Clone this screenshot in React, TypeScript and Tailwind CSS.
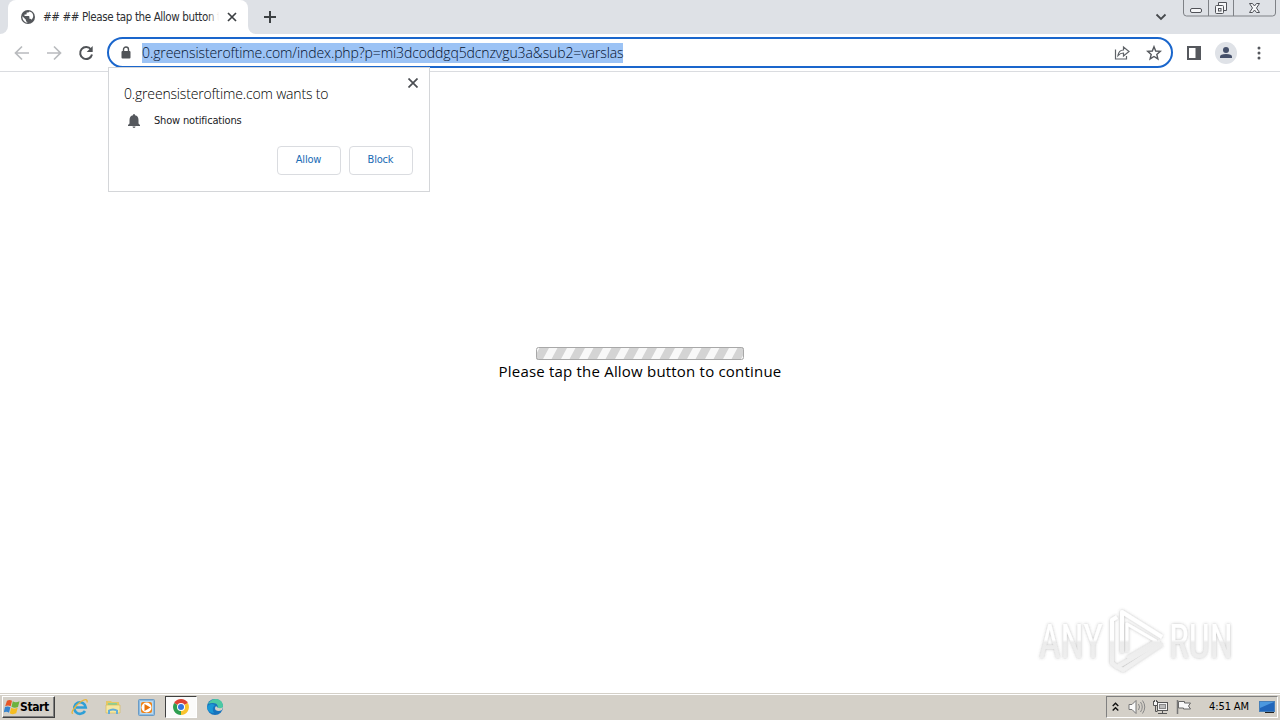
import React from "react";

function TabStrip() {
  return (
    <div className="flex h-[34px] shrink-0 items-start bg-[#dee1e6]">
      <div className="h-[34px] w-2 bg-white">
        <div className="h-full rounded-br-lg bg-[#dee1e6]" />
      </div>
      <div className="flex h-[34px] w-[240px] items-center rounded-t-lg bg-white pl-[13px]">
        <svg width="14" height="14" viewBox="2 2 20 20" className="shrink-0">
          <circle cx="12" cy="12" r="10" fill="#54575b" />
          <path d="M4 11l5 5v1c0 1.100.9 2 2 2v1.200C7 20 4 16 4 12zM14 4c-.3 1-1 1.600-2 1.600h-2v2c0 .5-.5 1-1 1H7v2h6c.5 0 1 .5 1 1v3h1c.9 0 1.600.6 1.900 1.400C22 11 19 5 14 4z" fill="#fff" />
        </svg>
        <div className="relative ml-2 w-[176px] shrink-0 overflow-hidden whitespace-nowrap text-[11.5px] leading-[16px] tracking-[-0.38px] text-[#2d2f33]">
          ## ## Please tap the Allow button t
          <div className="absolute inset-y-0 right-0 w-3 bg-linear-to-r from-white/0 to-white" />
        </div>
        <svg width="10" height="10" viewBox="0 0 10 10" className="ml-[8px] shrink-0" stroke="#3c4043" strokeWidth="1.7">
          <path d="M1 1l8 8M9 1L1 9" />
        </svg>
      </div>
      <div className="h-[34px] w-2 bg-white">
        <div className="h-full rounded-bl-lg bg-[#dee1e6]" />
      </div>
      <svg width="14" height="14" viewBox="0 0 14 14" className="mt-[10px] ml-[7px]" stroke="#3c4043" strokeWidth="2">
        <path d="M7 1v12M1 7h12" />
      </svg>
      <div className="flex-1" />
      <svg width="12" height="8" viewBox="0 0 12 8" className="mt-[13px] mr-[16px]" fill="none" stroke="#46494d" strokeWidth="1.8">
        <path d="M1.500 1.500L6 6l4.500-4.500" />
      </svg>
      <svg width="94" height="18" viewBox="0 0 94 18" className="mr-[3px]" fill="none" stroke="#7e8186">
        <path d="M.5 0v13q0 3 3 3h86q3 0 3-3V0M25.500 0v16M50.500 0v16" />
        <g stroke="#505258">
          <rect x="7.500" y="8.500" width="11" height="4" rx="1.500" fill="#f5f6f8" />
          <path d="M35.500 5V2.500h8v8H41" fill="#f5f6f8" />
          <rect x="32.500" y="5.500" width="8" height="8" rx="1" fill="#f5f6f8" />
          <rect x="35.500" y="8.500" width="2.500" height="2.500" />
          <path d="M66.500 3.500h3l2 2.500 2-2.500h3L73.500 8l3 4.500h-3l-2-2.500-2 2.500h-3L69.500 8z" fill="#f5f6f8" />
        </g>
      </svg>
    </div>
  );
}

function Toolbar() {
  return (
    <div className="flex h-[38px] shrink-0 items-center border-b border-[#dadce0] bg-white pl-[14px]">
      <svg width="16" height="16" viewBox="0 0 16 16" fill="none" stroke="#b9bbbe" strokeWidth="1.700">
        <path d="M15 8H2M8 1.500L1.500 8 8 14.500" />
      </svg>
      <svg width="16" height="16" viewBox="0 0 16 16" className="ml-4" fill="none" stroke="#b9bbbe" strokeWidth="1.700">
        <path d="M1 8h13M8 1.500L14.500 8 8 14.500" />
      </svg>
      <svg width="16" height="16" viewBox="0 0 16 16" className="ml-4" fill="none">
        <path d="M13 4.500A6 6 0 1 0 14 9.500" stroke="#505357" strokeWidth="2" />
        <path d="M14.700 1v6h-6z" fill="#505357" />
      </svg>
      <div className="ml-[13px] flex h-[31px] w-[1066px] items-center rounded-full border-2 border-[#1a66cc] bg-white">
        <svg width="10" height="14" viewBox="0 0 10 14" className="ml-3">
          <rect x="0.500" y="5" width="9" height="7.500" rx="1" fill="#505357" />
          <path d="M2.500 6V3.500a2.500 2.500 0 0 1 5 0V6" fill="none" stroke="#505357" strokeWidth="1.400" />
        </svg>
        <div className="ml-[11px] h-5 w-[481px] whitespace-nowrap bg-[#9cc3f5] font-['Open_Sans','Noto_Sans',sans-serif] text-[14px] leading-[20px] font-light [font-stretch:normal] tracking-[-0.1px] text-[#04122e]">
          0.greensisteroftime.com/index.php?p=mi3dcoddgq5dcnzvgu3a&amp;sub2=varslas
        </div>
        <div className="flex-1" />
        <svg width="16" height="16" viewBox="0 0 16 16" fill="none" stroke="#5f6368" strokeWidth="1.200">
          <path d="M1.500 4.500v9.500h11V11" />
          <path d="M4 10.500C4.500 7 6.500 5 9.500 5V2L15 6.500 9.500 11V8C7 8 5.500 8.800 4 10.500z" />
        </svg>
        <svg width="16" height="16" viewBox="0 0 16 16" className="mr-[9px] ml-4" fill="none" stroke="#55585d" strokeWidth="1.400">
          <path d="M8 1.700l1.700 4.300 4.600.4-3.500 3 1.100 4.500L8 11.500l-3.900 2.400 1.100-4.500-3.500-3 4.600-.4z" />
        </svg>
      </div>
      <svg width="14" height="14" viewBox="0 0 14 14" className="ml-[14px]">
        <path d="M0 0h14v14H0zM2 2v10h6.500V2z" fill="#55585d" fillRule="evenodd" />
      </svg>
      <svg width="22" height="22" viewBox="0 0 22 22" className="ml-[14px]">
        <circle cx="11" cy="11" r="11" fill="#dfe2e7" />
        <circle cx="11" cy="8" r="3" fill="#45506a" />
        <path d="M5 16v-1.500q0-2.500 6-2.500t6 2.500V16z" fill="#45506a" />
      </svg>
      <svg width="4" height="14" viewBox="0 0 4 14" className="ml-[20px]" fill="#55585d">
        <circle cx="2" cy="2" r="1.500" />
        <circle cx="2" cy="7" r="1.500" />
        <circle cx="2" cy="12" r="1.500" />
      </svg>
    </div>
  );
}

function PermissionPopup() {
  return (
    <div className="absolute top-[67px] left-[108px] flex h-[125px] w-[322px] flex-col border border-[#d4d6d9] bg-white pr-4 pl-[15px]">
      <div className="flex h-[34px] items-start justify-between">
        <div className="mt-[16px] font-['Open_Sans','Noto_Sans',sans-serif] text-[14px] leading-[20px] font-light [font-stretch:normal] whitespace-nowrap tracking-[-0.17px] text-black">0.greensisteroftime.com wants to</div>
        <svg width="10" height="10" viewBox="0 0 10 10" className="mt-[10px] mr-[-5px]" stroke="#4b4e53" strokeWidth="1.700">
          <path d="M.5.5l9 9M9.500.5l-9 9" />
        </svg>
      </div>
      <div className="mt-[9px] flex h-5 items-center">
        <svg width="14" height="16" viewBox="0 0 14 16" className="ml-[3px]" fill="#55585d">
          <path d="M7 1q1 0 1 1.300Q11.500 3 11.500 7v3.500L13 12v1H1v-1l1.500-1.500V7Q2.500 3 6 2.300 6 1 7 1zM5.500 13.600h3Q8.500 15 7 15t-1.500-1.400z" />
        </svg>
        <div className="ml-[13px] text-[11px] leading-[16px] whitespace-nowrap tracking-[-0.17px] text-[#202124]">Show notifications</div>
      </div>
      <div className="mt-[15px] flex justify-end gap-2 text-[11px] tracking-[-0.2px] text-[#1a6cb5]">
        <button className="h-[29px] w-16 rounded border border-[#dadce0] pr-px">Allow</button>
        <button className="h-[29px] w-16 rounded border border-[#dadce0] pr-px">Block</button>
      </div>
    </div>
  );
}

function AnyRunLogo() {
  return (
    <svg width="210" height="78" viewBox="1030 602 210 78" className="absolute top-[602px] left-[1030px]">
      <defs>
        <linearGradient id="fade" gradientUnits="userSpaceOnUse" x1="0" y1="610" x2="0" y2="672">
          <stop offset="0.48" stopColor="#fff" />
          <stop offset="0.52" stopColor="#ececec" />
          <stop offset="1" stopColor="#f1f1f1" />
        </linearGradient>
        <filter id="glow" x="-10%" y="-15%" width="120%" height="130%">
          <feDropShadow dx="0" dy="0" stdDeviation="1.500" floodColor="#555" floodOpacity="0.4" />
        </filter>
      </defs>
      <g filter="url(#glow)" fill="url(#fade)">
        <g fontFamily="Roboto" fontSize="49">
          <text x="1039" y="658" textLength="64" lengthAdjust="spacingAndGlyphs">ANY</text>
          <text x="1169" y="658" textLength="64" lengthAdjust="spacingAndGlyphs">RUN</text>
        </g>
        <g fill="none" stroke="url(#fade)" strokeWidth="4" strokeLinejoin="round">
          <path d="M1122 653V612l40 25" />
          <path d="M1117 617l-5 3v43l5 4 43-25" />
          <path d="M1162 644l-39 26-5-3" />
          <path d="M1127 652V624l29 17-29 17" strokeWidth="3" />
        </g>
      </g>
    </svg>
  );
}

function ChromeIcon() {
  return (
    <svg width="16" height="16" viewBox="0 0 16 16">
      <path d="M8 8L1.100 4A8 8 0 0 1 14.900 4z" fill="#df4334" />
      <path d="M8 8l6.900-4A8 8 0 0 1 8 16z" fill="#f9c32d" />
      <path d="M8 8v8A8 8 0 0 1 1.100 4z" fill="#2f9f50" />
      <circle cx="8" cy="8" r="4" fill="#fff" />
      <circle cx="8" cy="8" r="3" fill="#3475df" />
    </svg>
  );
}

function Taskbar() {
  return (
    <div className="flex h-[27px] shrink-0 items-center border-t border-[#d4d0c8] bg-[#d4d0c8] pr-[2px] pl-[2px] shadow-[inset_0_1px_0_#fff]">
      <div className="flex h-[22px] w-[53px] items-center border border-t-white border-l-white border-r-[#404040] border-b-[#404040] pl-px shadow-[inset_-1px_-1px_0_#808080]">
        <svg width="16" height="16" viewBox="0 0 16 16" className="shrink-0">
          <path d="M3 1.800Q5.500.3 8 1.800L6.700 7.200Q4 6 1.200 7.200z" fill="#e75626" />
          <path d="M8.800 2.300Q11.500 4 15.500 2.300l-1.500 5.600Q10.500 9.500 7.500 7.700z" fill="#6bb23e" />
          <path d="M1 8Q3.600 7 6.400 8.200L5 13.700Q2.500 12.200-.3 13.400z" fill="#3784ce" />
          <path d="M7.200 8.700Q10.500 10.500 13.700 8.800L12.200 14.300Q8.700 16 5.800 14.200z" fill="#f5bd20" />
        </svg>
        <span className="text-[12px] leading-[16px] font-bold tracking-[-0.4px] text-black">Start</span>
      </div>
      <svg width="18" height="18" viewBox="0 0 18 18" className="ml-4" fill="none">
        <path d="M14 13A5.800 5.800 0 1 1 14.800 9.500H5" stroke="#2f9fd6" strokeWidth="2.600" />
        <path d="M2 15C-1 17 3 8 10 3.500q7-4 6 1" stroke="#e7b53c" strokeWidth="1.300" />
      </svg>
      <svg width="16" height="16" viewBox="0 0 16 16" className="ml-4">
        <path d="M1 2h5l1 1h7v11H1z" fill="#e5c864" />
        <path d="M3 4h9v5H3z" fill="#8ccf95" />
        <path d="M1 6h14v8H1z" fill="#f6e7a0" stroke="#d4b553" strokeWidth=".6" />
        <path d="M3 15v-4q5-3 10 0v4h-2v-3q-3-1-6 0v3z" fill="#63add8" />
      </svg>
      <svg width="17" height="17" viewBox="0 0 17 17" className="ml-[17px]">
        <rect x=".5" y=".5" width="16" height="16" rx="1" fill="#8ebbe0" stroke="#6a9bc5" />
        <rect x="2" y="2" width="13" height="13" fill="#b9daf1" />
        <rect x="3" y="3" width="11" height="11" rx="2" fill="#ef8318" />
        <circle cx="8.500" cy="8.500" r="5" fill="#fff" />
        <path d="M6.500 5l6 3.500-6 3.500z" fill="#e8740c" />
      </svg>
      <div className="ml-[10px] flex h-[22px] w-[32px] items-center justify-center border border-t-[#404040] border-l-[#404040] border-r-white border-b-white bg-[#fbfbfa]">
        <ChromeIcon />
      </div>
      <svg width="16" height="16" viewBox="0 0 16 16" className="ml-[10px]">
        <circle cx="8" cy="8" r="8" fill="#1773bd" />
        <path d="M1 5Q4 0 9 0c5 0 7 4 7 7 0 3-3 4-6 3 2-3 0-6-4-6Q3 4 1 5z" fill="#4cc9a3" />
        <path d="M0 8q3-5 8-2-4 3-1 8Q1 14 0 8z" fill="#1a98d6" />
        <path d="M9 7q-2 2-.5 4 3 2 6.500 0l1-3q-4 3-7-1z" fill="#d4d0c8" />
      </svg>
      <div className="flex-1" />
      <div className="flex h-[22px] w-[172px] items-center border border-t-[#808080] border-l-[#808080] border-r-white border-b-white pl-[5px]">
        <svg width="7" height="10" viewBox="0 0 7 10" fill="none" stroke="#111" strokeWidth="1.400">
          <path d="M.7 4L3.500 1.200 6.300 4M.7 8.500l2.800-2.800 2.800 2.800" />
        </svg>
        <svg width="18" height="16" viewBox="0 0 18 16" className="ml-[9px]" fill="none" stroke="#777" strokeWidth="1">
          <path d="M1 5.500h3L8 1.500v13l-4-4H1z" fill="#fafafa" />
          <path d="M10.500 5q2 3 0 6M12.500 3q3.500 5 0 10M14.500 1.500q4.500 6.500 0 13" stroke="#888" />
        </svg>
        <svg width="17" height="16" viewBox="0 0 17 16" className="ml-[6px]" stroke="#555" fill="#f4f4f4">
          <rect x="5.500" y="3.500" width="10" height="8" />
          <rect x="7.500" y="5.500" width="6" height="4" fill="#bbb" stroke="#888" />
          <path d="M6 14.500h9M10.500 12v2M3.500 6.500v6h2" fill="none" />
          <path d="M1.500 2v4.500h4V2M2.500 1v2M4.500 1v2" />
        </svg>
        <svg width="17" height="16" viewBox="0 0 17 16" className="ml-[7px]" stroke="#666" fill="#f9f9f9">
          <path d="M2.500 2.500h6v1.500h6l-2 3 2 3h-7V9h-5z" />
          <path d="M1.500 1v14" stroke="#777" strokeWidth="1.500" />
        </svg>
        <span className="ml-[16px] w-[42px] text-[11px] leading-[16px] whitespace-nowrap tracking-[-0.1px] text-black">4:51 AM</span>
        <svg width="16" height="16" viewBox="0 0 16 16" className="ml-2">
          <rect x=".5" y="2.500" width="15" height="10" fill="#2166bb" stroke="#477fb8" />
          <path d="M1 3h14L1 9z" fill="#4b98df" />
          <path d="M6 13h9v1H6z" fill="#222" />
        </svg>
      </div>
    </div>
  );
}

const stripes = Array.from({ length: 13 }, (_, i) => i * 18 + 3);

export default function App() {
  return (
    <div className="relative flex h-[720px] w-[1280px] flex-col overflow-hidden bg-white font-['DejaVu_Sans_Condensed','DejaVu_Sans',sans-serif] [font-stretch:condensed]">
      <TabStrip />
      <Toolbar />
      <main className="flex flex-1 flex-col items-center pt-[275px]">
        <svg width="208" height="13" viewBox="0 0 208 13">
          <defs>
            <clipPath id="bar"><rect width="208" height="13" rx="2.500" /></clipPath>
          </defs>
          <g clipPath="url(#bar)">
            <rect width="208" height="13" fill="#f8f8f8" />
            {stripes.map((x) => (
              <path key={x} d={`M${x + 1} 0h9.500l-7 13h-9.500z`} fill="#d4d4d4" />
            ))}
          </g>
          <rect x=".5" y=".5" width="207" height="12" rx="2" fill="none" stroke="#a8a8a8" />
        </svg>
        <p className="font-['Open_Sans','Noto_Sans',sans-serif] text-[15px] leading-[22px] [font-stretch:normal] tracking-[0.2px] whitespace-nowrap text-black">Please tap the Allow button to continue</p>
      </main>
      <Taskbar />
      <PermissionPopup />
      <AnyRunLogo />
    </div>
  );
}
